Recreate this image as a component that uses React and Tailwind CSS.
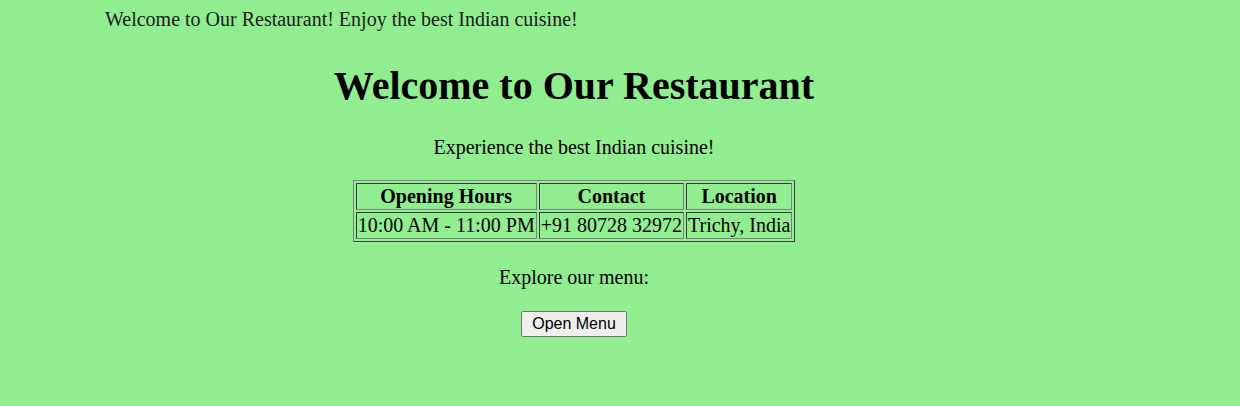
export default function App() {
    const cell = 'border border-solid border-t-[#3a3a3a] border-l-[#3a3a3a] border-r-[#808080] border-b-[#808080] p-px';

    return (
        <div className="min-h-[406px] bg-[#90ee90] pt-2 font-['Liberation_Serif','Times_New_Roman',serif] text-[20px] leading-[23px] text-black">
            {/* scrolling banner, frozen where the screenshot caught it */}
            <div className="h-[23px] overflow-hidden whitespace-nowrap pl-[105px] text-[#1a1a1a]">
                Welcome to Our Restaurant! Enjoy the best Indian cuisine!
            </div>

            <div className="ml-2 w-[1132px] text-center">
                <h1 className="mt-[32px] text-[40px] font-bold leading-[46px]">Welcome to Our Restaurant</h1>
                <p className="mt-[27px]">Experience the best Indian cuisine!</p>

                <table className="mx-auto mt-[21px] border-separate border-spacing-[2px] border border-solid border-t-[#808080] border-l-[#808080] border-r-[#404040] border-b-[#404040]">
                    <thead>
                        <tr>
                            <th className={cell}>Opening Hours</th>
                            <th className={cell}>Contact</th>
                            <th className={cell}>Location</th>
                        </tr>
                    </thead>
                    <tbody>
                        <tr>
                            <td className={cell}>10:00 AM - 11:00 PM</td>
                            <td className={cell}>+91 80728 32972</td>
                            <td className={cell}>Trichy, India</td>
                        </tr>
                    </tbody>
                </table>

                <p className="mt-[24px]">Explore our menu:</p>
                <button className="mx-auto mt-[22px] block rounded-[2px] border border-[#767676] bg-[#efefef] px-[10px] py-[3px] font-['Liberation_Sans',Arial,sans-serif] text-[16px] leading-[18px] text-black">
                    Open Menu
                </button>
            </div>
        </div>
    );
}
